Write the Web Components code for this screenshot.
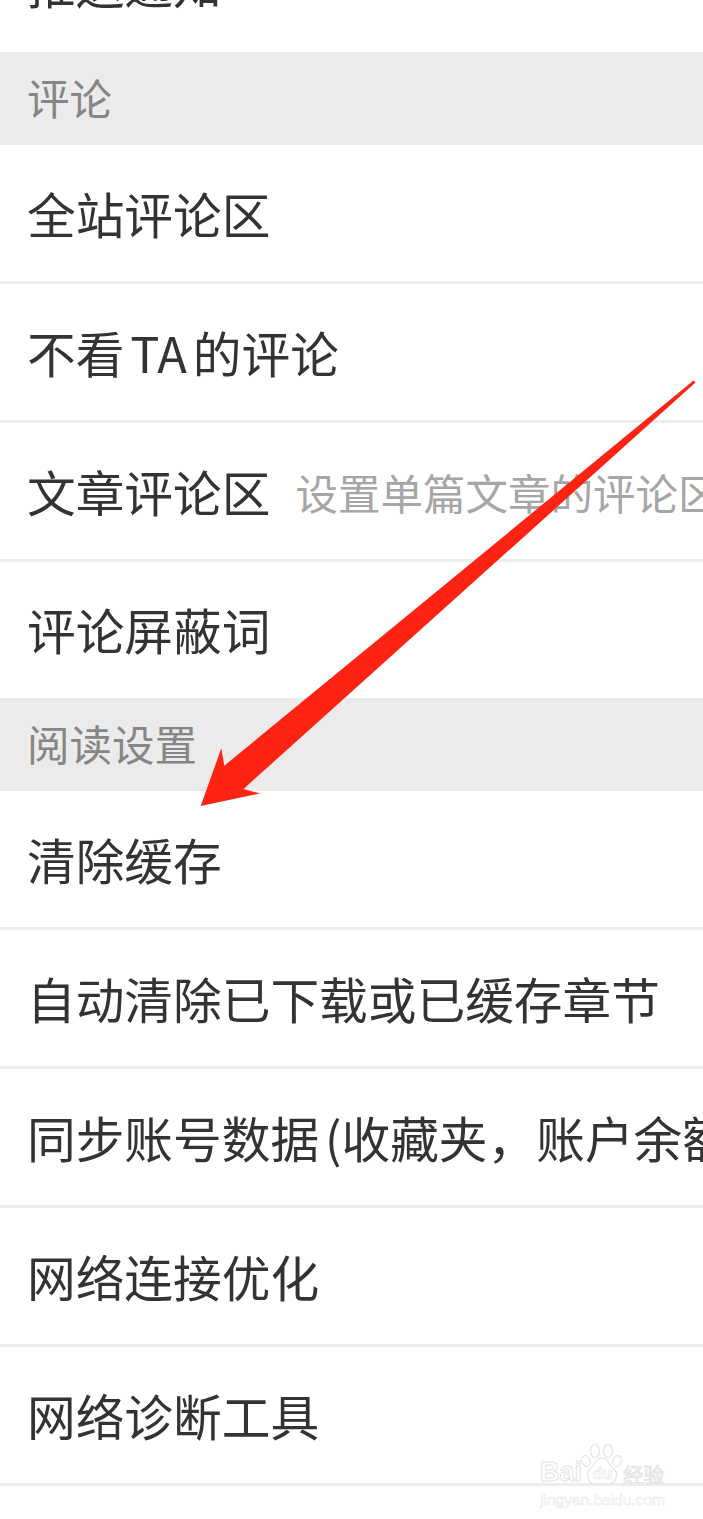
<!DOCTYPE html>
<html lang="zh-CN">
<head>
<meta charset="utf-8">
<title>设置</title>
<style>
  html, body {
    margin: 0;
    height: 1519px;
    overflow: hidden;
    background: #fff;
    font-family: "Noto Sans CJK SC", "Noto Sans", sans-serif;
  }
</style>
</head>
<body>
<settings-page>
  <settings-row plain>推送通知</settings-row>
  <settings-header>评论</settings-header>
  <settings-row>全站评论区</settings-row>
  <settings-row>不看 TA 的评论</settings-row>
  <settings-row>文章评论区<span slot="hint">设置单篇文章的评论区</span></settings-row>
  <settings-row plain>评论屏蔽词</settings-row>
  <settings-header>阅读设置</settings-header>
  <settings-row>清除缓存</settings-row>
  <settings-row>自动清除已下载或已缓存章节</settings-row>
  <settings-row>同步账号数据 (收藏夹，账户余额等)</settings-row>
  <settings-row>网络连接优化</settings-row>
  <settings-row>网络诊断工具</settings-row>
  <red-arrow slot="overlay"></red-arrow>
  <baidu-mark slot="overlay"></baidu-mark>
</settings-page>

<script>
class SettingsPage extends HTMLElement {
  constructor() {
    super();
    const shadow = this.attachShadow({ mode: "open" });
    shadow.innerHTML = `
    <style>
    :host {
      display: block;
      position: relative;
      height: 1519px;
      overflow: hidden;
      background: #fff;
    }
    .list {
      display: flex;
      flex-direction: column;
      margin-top: -84px;
    }
    </style>
    <div class="list"><slot></slot></div>
    <slot name="overlay"></slot>`;
  }
}

class SettingsHeader extends HTMLElement {
  constructor() {
    super();
    const shadow = this.attachShadow({ mode: "open" });
    shadow.innerHTML = `
    <style>
    :host {
      display: flex;
      align-items: center;
      box-sizing: border-box;
      height: 93px;
      padding-inline-start: 27px;
      padding-block-end: 3px;
      background: #ebebeb;
      color: #868686;
      font-size: 42.5px;
      line-height: 1;
    }
    </style>
    <slot></slot>`;
  }
}

class SettingsRow extends HTMLElement {
  constructor() {
    super();
    const shadow = this.attachShadow({ mode: "open" });
    shadow.innerHTML = `
    <style>
    :host {
      display: flex;
      align-items: center;
      box-sizing: border-box;
      height: 139px;
      padding-inline-start: 27px;
      border-bottom: solid 3px #ededed;
      background: #fff;
      color: #333;
      font-size: 48.7px;
      line-height: 1;
      word-spacing: -5px;
      white-space: nowrap;
      overflow: hidden;
    }
    :host([plain]) {
      height: 136px;
      border-bottom: 0;
      padding-block-end: 2px;
    }
    .hint {
      margin-inline-start: 25px;
      margin-block-start: 2px;
      color: #a6a6a6;
      font-size: 42.5px;
    }
    </style>
    <slot></slot><span class="hint"><slot name="hint"></slot></span>`;
  }
}

class RedArrow extends HTMLElement {
  constructor() {
    super();
    const shadow = this.attachShadow({ mode: "open" });
    shadow.innerHTML = `
    <style>
    :host {
      position: absolute;
      inset: 0;
      pointer-events: none;
    }
    svg {
      display: block;
    }
    </style>
    <svg width="703" height="1519" viewBox="0 0 703 1519">
      <path fill="#ff2314" d="M693.500 380.500 L695.500 382.500 L243.500 789 L260 793.500 L200.700 806 L221.300 748.300 L224.300 765.700 Z"/>
    </svg>`;
  }
}

class BaiduMark extends HTMLElement {
  constructor() {
    super();
    const shadow = this.attachShadow({ mode: "open" });
    shadow.innerHTML = `
    <style>
    :host {
      position: absolute;
      left: 540px;
      top: 1442px;
      width: 130px;
      height: 66px;
      display: grid;
      grid-template-columns: auto auto 1fr;
      grid-template-rows: 44px auto;
      align-items: end;
      pointer-events: none;
      font-family: "Liberation Sans", sans-serif;
      color: #fff;
      -webkit-text-stroke: 1px #e4e4e4;
    }
    .bai {
      font-size: 27px;
      font-weight: bold;
      line-height: 1;
    }
    svg {
      display: block;
      margin-inline-start: -2px;
    }
    .jy {
      font-family: "Noto Sans CJK SC", sans-serif;
      font-size: 20.5px;
      line-height: 1.1;
      margin-inline-start: -3px;
    }
    .url {
      grid-column: 1 / -1;
      font-size: 15.500px;
      line-height: 1.1;
      -webkit-text-stroke: .6px #e9e9e9;
    }
    .du {
      font: bold 16px "Liberation Sans", sans-serif;
      fill: #fff;
      stroke: #e4e4e4;
      stroke-width: .7px;
    }
    </style>
    <span class="bai">Bai</span>
    <svg width="46" height="44" viewBox="0 0 46 44" fill="#fff" stroke="#e4e4e4" stroke-width="1.2">
      <ellipse cx="6" cy="19" rx="4" ry="5.500" transform="rotate(-20 6 19)"/>
      <ellipse cx="15" cy="9" rx="4.500" ry="6.500"/>
      <ellipse cx="28" cy="9" rx="4.500" ry="6.500"/>
      <ellipse cx="37" cy="19" rx="4" ry="5.500" transform="rotate(20 37 19)"/>
      <path d="M22 16 C29 16 28 23 33 26 C39 30 37 42 28 42 C24 42 20 41 16 42 C7 42 5 31 11 26 C16 23 15 16 22 16 Z"/>
      <text class="du" x="12.500" y="37">du</text>
    </svg>
    <span class="jy">经验</span>
    <span class="url">jingyan.baidu.com</span>`;
  }
}

customElements.define("settings-page", SettingsPage);
customElements.define("settings-header", SettingsHeader);
customElements.define("settings-row", SettingsRow);
customElements.define("red-arrow", RedArrow);
customElements.define("baidu-mark", BaiduMark);
</script>
</body>
</html>
